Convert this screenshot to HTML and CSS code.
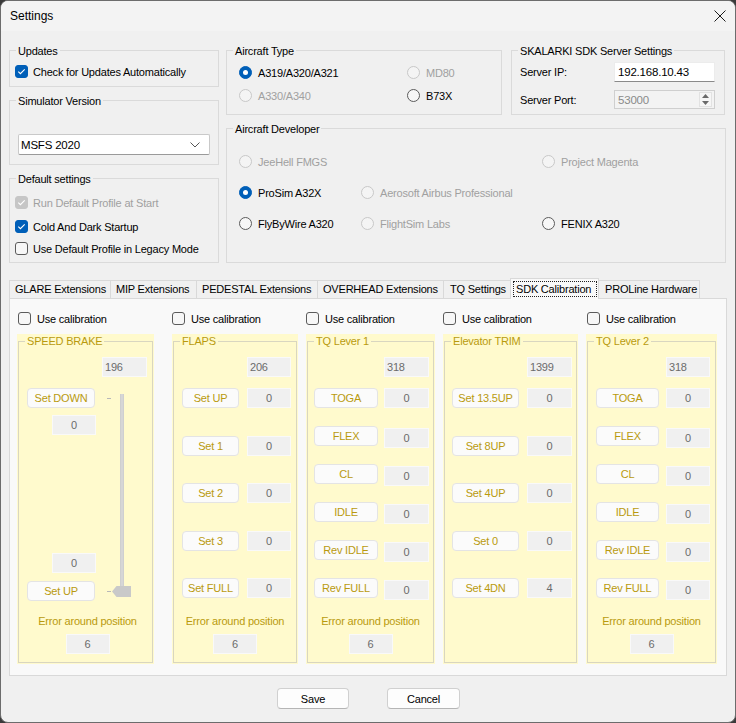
FILE: index.html
```html
<!DOCTYPE html>
<html>
<head>
<meta charset="utf-8">
<title>Settings</title>
<link rel="stylesheet" href="styles.css">
</head>
<body>
<div class="window">
  <div class="titlebar">
    <span class="title">Settings</span>
    <svg class="close" width="12" height="12" viewBox="0 0 12 12"><path d="M0.5 0.5 11.5 11.5 M11.5 0.5 0.5 11.5"/></svg>
  </div>
  <div class="client">
    <div class="top">
      <div class="leftcol">
        <div class="gb gb-updates">
          <div class="gb-title">Updates</div>
          <div class="chk first"><span class="cb on"><svg viewBox="0 0 11 11"><path d="M2.3 5.6 4.4 7.7 8.7 3.3"/></svg></span>Check for Updates Automatically</div>
        </div>
        <div class="gb gb-sim">
          <div class="gb-title">Simulator Version</div>
          <div class="combo"><span>MSFS 2020</span><svg width="10" height="6" viewBox="0 0 10 6"><path d="M0.5 0.5 5 5 9.5 0.5"/></svg></div>
        </div>
        <div class="gb gb-default">
          <div class="gb-title">Default settings</div>
          <div class="chk dis r1"><span class="cb on dis"><svg viewBox="0 0 11 11"><path d="M2.3 5.6 4.4 7.7 8.7 3.3"/></svg></span>Run Default Profile at Start</div>
          <div class="chk r2"><span class="cb on"><svg viewBox="0 0 11 11"><path d="M2.3 5.6 4.4 7.7 8.7 3.3"/></svg></span>Cold And Dark Startup</div>
          <div class="chk r3"><span class="cb"></span>Use Default Profile in Legacy Mode</div>
        </div>
      </div>
      <div class="rightarea">
        <div class="row1">
          <div class="gb gb-type">
            <div class="gb-title">Aircraft Type</div>
            <div class="type-grid">
              <div class="opt"><span class="rb on"></span>A319/A320/A321</div>
              <div class="opt dis"><span class="rb"></span>MD80</div>
              <div class="opt dis"><span class="rb"></span>A330/A340</div>
              <div class="opt"><span class="rb"></span>B73X</div>
            </div>
          </div>
          <div class="gb gb-sdk">
            <div class="gb-title">SKALARKI SDK Server Settings</div>
            <div class="sdk-grid">
              <span class="lbl">Server IP:</span>
              <div class="ipbox">192.168.10.43</div>
              <span class="lbl">Server Port:</span>
              <div class="portbox"><span>53000</span>
                <div class="spin">
                  <svg width="7" height="4" viewBox="0 0 7 4"><path d="M0 4 3.5 0 7 4Z"/></svg>
                  <svg width="7" height="4" viewBox="0 0 7 4"><path d="M0 0 3.5 4 7 0Z"/></svg>
                </div>
              </div>
            </div>
          </div>
        </div>
        <div class="gb gb-dev">
          <div class="gb-title">Aircraft Developer</div>
          <div class="dev-grid">
            <div class="opt dis"><span class="rb"></span>JeeHell FMGS</div>
            <div></div>
            <div class="opt dis"><span class="rb"></span>Project Magenta</div>
            <div class="opt"><span class="rb on"></span>ProSim A32X</div>
            <div class="opt dis"><span class="rb"></span>Aerosoft Airbus Professional</div>
            <div></div>
            <div class="opt"><span class="rb"></span>FlyByWire A320</div>
            <div class="opt dis"><span class="rb"></span>FlightSim Labs</div>
            <div class="opt"><span class="rb"></span>FENIX A320</div>
          </div>
        </div>
      </div>
    </div>

    <div class="tabstrip">
      <div class="tab t-glare">GLARE Extensions</div>
      <div class="tab t-mip">MIP Extensions</div>
      <div class="tab t-ped">PEDESTAL Extensions</div>
      <div class="tab t-ovh">OVERHEAD Extensions</div>
      <div class="tab t-tq">TQ Settings</div>
      <div class="tab t-sdk sel"><span class="focus">SDK Calibration</span></div>
      <div class="tab t-pro">PROLine Hardware</div>
    </div>

    <div class="tabpage">
      <!-- SPEED BRAKE -->
      <div class="col c1">
        <div class="usecal"><span class="cb"></span>Use calibration</div>
        <div class="panel sb">
          <div class="pinner">
            <div class="ptitle">SPEED BRAKE</div>
            <div class="ptop"><div class="val left">196</div></div>
            <div class="sb-body">
              <div class="sb-left">
                <div class="sb-grp">
                  <div class="btn sb-btn">Set DOWN</div>
                  <div class="val sb-val down">0</div>
                </div>
                <div class="sb-grp">
                  <div class="val sb-val">0</div>
                  <div class="btn sb-btn up">Set UP</div>
                </div>
              </div>
              <div class="slider">
                <span class="tick t1"></span>
                <span class="track"></span>
                <span class="tick t2"></span>
                <svg class="thumb" width="19" height="11" viewBox="0 0 19 11"><path d="M0 5.5 4.5 0 19 0 19 11 4.5 11Z"/></svg>
              </div>
            </div>
            <div class="pbottom">
              <div class="perr">Error around position</div>
              <div class="val perrbox">6</div>
            </div>
          </div>
        </div>
      </div>

      <!-- FLAPS -->
      <div class="col c2">
        <div class="usecal"><span class="cb"></span>Use calibration</div>
        <div class="panel flaps">
          <div class="pinner">
            <div class="ptitle">FLAPS</div>
            <div class="ptop"><div class="val left">206</div></div>
            <div class="prows">
              <div class="prow"><div class="btn">Set UP</div><div class="val">0</div></div>
              <div class="prow"><div class="btn">Set 1</div><div class="val">0</div></div>
              <div class="prow"><div class="btn">Set 2</div><div class="val">0</div></div>
              <div class="prow"><div class="btn">Set 3</div><div class="val">0</div></div>
              <div class="prow"><div class="btn">Set FULL</div><div class="val">0</div></div>
            </div>
            <div class="pbottom">
              <div class="perr">Error around position</div>
              <div class="val perrbox">6</div>
            </div>
          </div>
        </div>
      </div>

      <!-- TQ Lever 1 -->
      <div class="col c3">
        <div class="usecal"><span class="cb"></span>Use calibration</div>
        <div class="panel tq tq1">
          <div class="pinner">
            <div class="ptitle">TQ Lever 1</div>
            <div class="ptop"><div class="val left">318</div></div>
            <div class="prows">
              <div class="prow"><div class="btn">TOGA</div><div class="val">0</div></div>
              <div class="prow"><div class="btn">FLEX</div><div class="val">0</div></div>
              <div class="prow"><div class="btn">CL</div><div class="val">0</div></div>
              <div class="prow"><div class="btn">IDLE</div><div class="val">0</div></div>
              <div class="prow"><div class="btn">Rev IDLE</div><div class="val">0</div></div>
              <div class="prow"><div class="btn">Rev FULL</div><div class="val">0</div></div>
            </div>
            <div class="pbottom">
              <div class="perr">Error around position</div>
              <div class="val perrbox">6</div>
            </div>
          </div>
        </div>
      </div>

      <!-- Elevator TRIM -->
      <div class="col c4">
        <div class="usecal"><span class="cb"></span>Use calibration</div>
        <div class="panel trim">
          <div class="pinner">
            <div class="ptitle">Elevator TRIM</div>
            <div class="ptop"><div class="val left">1399</div></div>
            <div class="prows">
              <div class="prow"><div class="btn">Set 13.5UP</div><div class="val">0</div></div>
              <div class="prow"><div class="btn">Set 8UP</div><div class="val">0</div></div>
              <div class="prow"><div class="btn">Set 4UP</div><div class="val">0</div></div>
              <div class="prow"><div class="btn">Set 0</div><div class="val">0</div></div>
              <div class="prow"><div class="btn">Set 4DN</div><div class="val">4</div></div>
            </div>
          </div>
        </div>
      </div>

      <!-- TQ Lever 2 -->
      <div class="col c5">
        <div class="usecal"><span class="cb"></span>Use calibration</div>
        <div class="panel tq tq2">
          <div class="pinner">
            <div class="ptitle">TQ Lever 2</div>
            <div class="ptop"><div class="val left">318</div></div>
            <div class="prows">
              <div class="prow"><div class="btn">TOGA</div><div class="val">0</div></div>
              <div class="prow"><div class="btn">FLEX</div><div class="val">0</div></div>
              <div class="prow"><div class="btn">CL</div><div class="val">0</div></div>
              <div class="prow"><div class="btn">IDLE</div><div class="val">0</div></div>
              <div class="prow"><div class="btn">Rev IDLE</div><div class="val">0</div></div>
              <div class="prow"><div class="btn">Rev FULL</div><div class="val">0</div></div>
            </div>
            <div class="pbottom">
              <div class="perr">Error around position</div>
              <div class="val perrbox">6</div>
            </div>
          </div>
        </div>
      </div>
    </div>

    <div class="buttons">
      <div class="mbtn save">Save</div>
      <div class="mbtn cancel">Cancel</div>
    </div>
  </div>
</div>
</body>
</html>
```
FILE: styles.css
```css
* { box-sizing: border-box; }
html, body { margin: 0; padding: 0; }
body {
  width: 736px; height: 723px; overflow: hidden;
  font-family: "Liberation Sans", Arial, sans-serif;
  font-size: 11px; letter-spacing: -0.2px; color: #000;
  background: #3a3a3a;
}
.window {
  width: 736px; height: 723px;
  border: 1px solid #6c6c6c; border-radius: 8px;
  background: #f0f0f0;
  display: flex; flex-direction: column; overflow: hidden;
}
.titlebar {
  height: 30px; flex: none;
  display: flex; align-items: center; justify-content: space-between;
  padding: 0 9px;
  background: #f3f3f3;
}
.title { font-size: 12px; letter-spacing: 0; }
.close path { stroke: #1a1a1a; stroke-width: 1; fill: none; }

.client { flex: 1; padding: 19px 0 0 8px; display: flex; flex-direction: column; }

/* group boxes */
.gb { border: 1px solid #dadada; display: flex; flex-direction: column; }
.gb-title {
  align-self: flex-start; margin: -7px 0 0 6px; padding: 0 2px;
  line-height: 14px; background: #f0f0f0;
}
.top { display: flex; }
.leftcol { width: 210px; display: flex; flex-direction: column; gap: 13px; }
.gb-updates { height: 37px; }
.gb-sim { height: 65px; }
.gb-default { height: 85px; }
.rightarea { width: 500px; margin-left: 7px; display: flex; flex-direction: column; }
.row1 { display: flex; }
.gb-type { width: 276px; height: 65px; }
.gb-sdk { width: 214px; height: 65px; margin-left: 9px; }
.gb-dev { height: 135px; margin-top: 13px; }

/* checkbox */
.cb {
  width: 13px; height: 13px; flex: none;
  border: 1px solid #5b5b5b; border-radius: 3px; background: #f7f7f7;
  display: inline-flex; align-items: center; justify-content: center;
}
.cb.on { background: #005fb8; border-color: #005fb8; }
.cb.on.dis { background: #c6c6c6; border-color: #c6c6c6; }
.cb svg { width: 11px; height: 11px; }
.cb svg path { stroke: #fff; stroke-width: 1.1; fill: none; }
.chk { display: flex; align-items: center; height: 13px; margin-left: 5px; white-space: nowrap; }
.chk .cb { margin-right: 5px; }
.chk.dis { color: #a0a0a0; }
.chk.first { margin-top: 7px; }
.chk.r1 { margin-top: 10px; }
.chk.r2 { margin-top: 11px; }
.chk.r3 { margin-top: 9px; }

/* radio */
.rb {
  width: 13px; height: 13px; flex: none; border-radius: 50%;
  border: 1px solid #5b5b5b; background: #f7f7f7;
  display: inline-flex; align-items: center; justify-content: center;
  margin-right: 6px;
}
.rb.on { background: #005fb8; border-color: #005fb8; }
.rb.on::after { content: ""; width: 5px; height: 5px; border-radius: 50%; background: #fff; }
.opt { display: flex; align-items: center; height: 13px; white-space: nowrap; }
.opt.dis { color: #a0a0a0; }
.opt.dis .rb { border-color: #c8c8c8; background: #f4f4f4; }

.combo {
  margin: 26px 0 0 8px; width: 192px; height: 21px;
  background: #fff; border: 1px solid #c9c9c9; border-bottom-color: #9a9a9a; border-radius: 2px;
  display: flex; align-items: center; justify-content: space-between;
  padding: 0 9px 0 2px; font-size: 11.5px;
}
.combo svg path { stroke: #555; stroke-width: 1; fill: none; }

.type-grid {
  display: grid; grid-template-columns: 168px auto; row-gap: 10px;
  margin-top: 8px; padding-left: 12px;
}

.sdk-grid {
  display: grid; grid-template-columns: 95px 101px; grid-template-rows: 20px 19px;
  row-gap: 8px; align-items: center; margin-top: 4px; padding-left: 7px;
}
.lbl { padding-left: 1px; }
.ipbox {
  height: 20px; background: #fff; border: 1px solid #ececec; border-bottom-color: #8a8a8a;
  padding-left: 3px; display: flex; align-items: center; font-size: 11.5px;
}
.portbox {
  height: 19px; background: #f3f3f3; border: 1px solid #cfcfcf; color: #8a8a8a;
  padding-left: 3px; display: flex; align-items: center; justify-content: space-between;
  font-size: 11.5px;
}
.spin {
  width: 13px; height: 15px; margin-right: 2px;
  display: flex; flex-direction: column; align-items: center; justify-content: space-around;
  border: 1px solid #e2e2e2; background: #f6f6f6;
}
.spin svg path { fill: #6a6a6a; }

.dev-grid {
  display: grid; grid-template-columns: 122px 181px auto; grid-template-rows: 13px 13px 13px;
  row-gap: 18px; margin-top: 19px; padding-left: 12px;
}

/* tabs */
.tabstrip { display: flex; align-items: flex-end; height: 20px; margin-top: 15px; }
.tab {
  height: 18px; border: 1px solid #d9d9d9; border-bottom: none; margin-right: -1px;
  background: #f0f0f0; padding-left: 5px; line-height: 17px; white-space: nowrap;
}
.t-glare { width: 102px; }
.t-mip { width: 87px; }
.t-ped { width: 122px; }
.t-ovh { width: 127px; }
.t-tq { width: 68px; padding-left: 6px; }
.t-sdk { width: 89px; }
.t-pro { width: 102px; padding-left: 6px; }
.tab.sel {
  height: 21px; margin-bottom: -1px; position: relative; z-index: 1;
  background: #f9f9f9; padding: 2px 1px 2px 2px;
}
.focus {
  display: flex; align-items: center; height: 16px; padding-left: 2px;
  border: 1px dotted #222;
}

.tabpage {
  width: 718px; height: 378px; border: 1px solid #d9d9d9; background: #f9f9f9;
  display: flex; padding: 13px 0 0 7px;
}
.col { display: flex; flex-direction: column; }
.c1 { width: 137px; margin-right: 18px; }
.c2 { width: 126px; margin-right: 8px; }
.c3 { width: 129px; margin-right: 8px; }
.c4 { width: 135px; margin-right: 8px; }
.c5 { width: 131px; }
.usecal { display: flex; align-items: center; height: 13px; margin-bottom: 9px; white-space: nowrap; }
.usecal .cb { margin-right: 6px; }
.c1 .usecal { padding-left: 1px; }
.c5 .usecal { padding-left: 1px; }

/* calibration panels */
.panel {
  height: 330px; background: #fffacd; padding: 7px 1px 1px 1px; display: flex;
  color: #b99a0e;
  --pl: 8px; --bw: 57px; --g: 8px; --vw: 44px; --rg: 27.5px;
}
.pinner { flex: 1; border: 1px solid #d9d6c0; display: flex; flex-direction: column; }
.ptitle {
  align-self: flex-start; margin: -8px 0 0 6px; padding: 0 2px;
  line-height: 14px; background: #fffacd; white-space: nowrap;
}
.flaps { --pl: 8px; --bw: 57px; --g: 8px; --vw: 44px; }
.tq1 { --pl: 6px; --bw: 64px; --g: 6px; --vw: 45px; --rg: 18px; }
.trim { --pl: 7px; --bw: 67px; --g: 8px; --vw: 45px; }
.tq2 { --pl: 8px; --bw: 63px; --g: 7px; --vw: 44px; --rg: 18px; }

.btn {
  height: 20px; background: #fbfbfb; border: 1px solid #e4e4e4; border-radius: 4px;
  display: flex; align-items: center; justify-content: center; white-space: nowrap;
}
.val {
  height: 20px; background: #f0f0f0; border: 1px solid #f9f9f9; color: #6b6b6b;
  display: flex; align-items: center; justify-content: center;
}
.val.left { justify-content: flex-start; padding-left: 2px; }

.ptop { display: flex; margin-top: 9px; padding-left: calc(var(--pl) + var(--bw) + var(--g)); }
.ptop .val { width: var(--vw); }
.prows { display: flex; flex-direction: column; gap: var(--rg); margin-top: 11px; }
.prow { display: flex; align-items: flex-start; gap: var(--g); padding-left: var(--pl); height: 20px; }
.prow .btn { width: var(--bw); }
.prow .val { width: var(--vw); }
.tq .prow + .prow .val { margin-top: 2px; }

.pbottom { margin-top: auto; display: flex; flex-direction: column; align-items: center; padding-bottom: 8px; }
.perr { line-height: 14px; white-space: nowrap; }
.perrbox { width: 44px; margin-top: 6px; }

/* speed brake */
.sb .ptop { padding-left: 83px; }
.sb .ptop .val { width: 45px; }
.sb-body { display: flex; height: 213px; margin-top: 11px; padding-left: 8px; }
.sb-left { width: 68px; display: flex; flex-direction: column; justify-content: space-between; }
.sb-grp { display: flex; flex-direction: column; }
.sb-btn { width: 68px; }
.sb-btn.up { margin-top: 8px; }
.sb-val { width: 44px; margin-left: 25px; }
.sb-val.down { margin-top: 7px; }
.slider { position: relative; width: 28px; margin-left: 9px; }
.track { position: absolute; left: 16px; top: 6px; width: 4px; height: 197px; background: #d6d6d6; border-left: 1px solid #cfcfcf; border-right: 1px solid #cfcfcf; }
.tick { position: absolute; left: 3px; width: 4px; height: 1px; background: #b8b8b8; }
.t1 { top: 10px; }
.t2 { top: 203px; }
.thumb { position: absolute; left: 8px; top: 198px; }
.thumb path { fill: #c9c9c9; }
.sb .pbottom { padding-left: 4px; }

/* bottom buttons */
.buttons { display: flex; margin-top: 12px; padding-left: 268px; }
.mbtn {
  height: 21px; background: #fdfdfd; border: 1px solid #d0d0d0; border-bottom-color: #b5b5b5;
  border-radius: 4px; display: flex; align-items: center; justify-content: center;
}
.save { width: 72px; }
.cancel { width: 73px; margin-left: 38px; }
```
